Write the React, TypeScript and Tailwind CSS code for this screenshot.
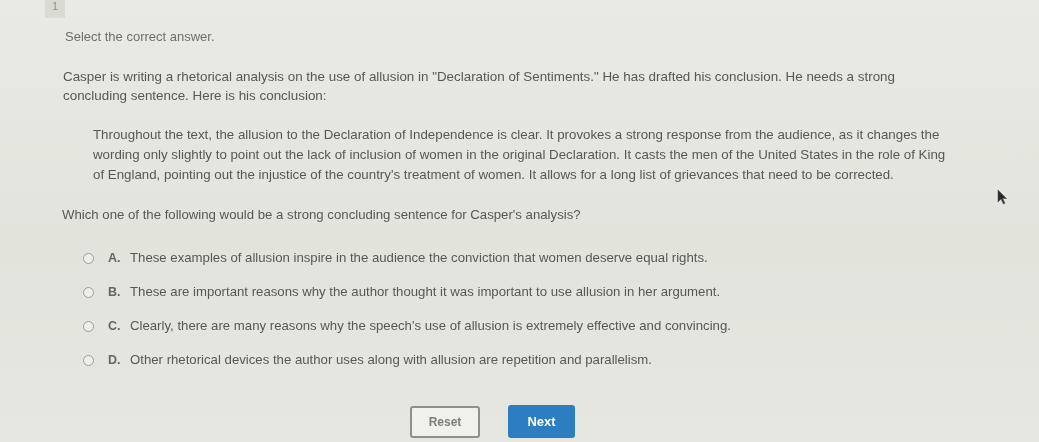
import React from "react";

const OPTIONS = [
  { key: "A.", text: "These examples of allusion inspire in the audience the conviction that women deserve equal rights." },
  { key: "B.", text: "These are important reasons why the author thought it was important to use allusion in her argument." },
  { key: "C.", text: "Clearly, there are many reasons why the speech's use of allusion is extremely effective and convincing." },
  { key: "D.", text: "Other rhetorical devices the author uses along with allusion are repetition and parallelism." },
];

function CursorArrow() {
  return (
    <svg width="11" height="16" viewBox="0 0 11 16" className="absolute left-[997px] top-[189px] blur-[0.6px]">
      <path d="M1 1 L1 13 L4 10 L6.5 15 L8 14.3 L5.6 9.5 L9.5 9.5 Z" fill="#2a2a2a" stroke="#555" strokeWidth="0.6" />
    </svg>
  );
}

export default function App() {
  return (
    <main className="relative w-[1039px] h-[442px] overflow-hidden bg-[#e3e5dd] font-['Liberation_Sans',Arial,sans-serif] text-[#575854]">
      <div className="absolute inset-0 pointer-events-none bg-[linear-gradient(180deg,#e9eae3_0%,#e2e4dc_55%,#e6e7e0_100%)]" />
      <div className="relative flex flex-col blur-[0.6px]">
        <div className="ml-[45px] w-[20px] h-[18px] bg-[#d9dbd3] text-[10px] leading-[14px] text-center text-[#8a8b86]">1</div>

        <p className="mt-[9px] ml-[65px] text-[13px] leading-[20px] text-[#6e6f6a]">Select the correct answer.</p>

        <p className="mt-[20px] ml-[63px] text-[13.4px] leading-[19px] whitespace-nowrap">
          Casper is writing a rhetorical analysis on the use of allusion in "Declaration of Sentiments." He has drafted his conclusion. He needs a strong
          <br />
          concluding sentence. Here is his conclusion:
        </p>

        <p className="mt-[20px] ml-[93px] text-[13.3px] leading-[20px] whitespace-nowrap">
          Throughout the text, the allusion to the Declaration of Independence is clear. It provokes a strong response from the audience, as it changes the
          <br />
          wording only slightly to point out the lack of inclusion of women in the original Declaration. It casts the men of the United States in the role of King
          <br />
          of England, pointing out the injustice of the country's treatment of women. It allows for a long list of grievances that need to be corrected.
        </p>

        <p className="mt-[20px] ml-[62px] text-[13.2px] leading-[20px] whitespace-nowrap">
          Which one of the following would be a strong concluding sentence for Casper's analysis?
        </p>

        <ul className="mt-[23px] flex flex-col gap-[14px]">
          {OPTIONS.map((o) => (
            <li key={o.key} className="flex items-center h-[20px] ml-[83px] text-[13.2px] leading-[20px] whitespace-nowrap">
              <span className="w-[11px] h-[11px] rounded-full border border-[#9c9d98] bg-[#eeefea] shrink-0" />
              <span className="ml-[14px] w-[22px] font-bold text-[12.5px] text-[#656661]">{o.key}</span>
              <span>{o.text}</span>
            </li>
          ))}
        </ul>

        <div className="mt-[35px] ml-[410px] flex items-center gap-[28px]">
          <button className="w-[70px] h-[32px] rounded-[3px] border-2 border-[#8e8f8b] bg-[#f0f1ec] text-[12px] font-bold text-[#7d7e7a]">
            Reset
          </button>
          <button className="w-[67px] h-[33px] rounded-[3px] bg-[#2c7ec0] text-[13px] font-bold text-white">
            Next
          </button>
        </div>
      </div>
      <CursorArrow />
    </main>
  );
}
